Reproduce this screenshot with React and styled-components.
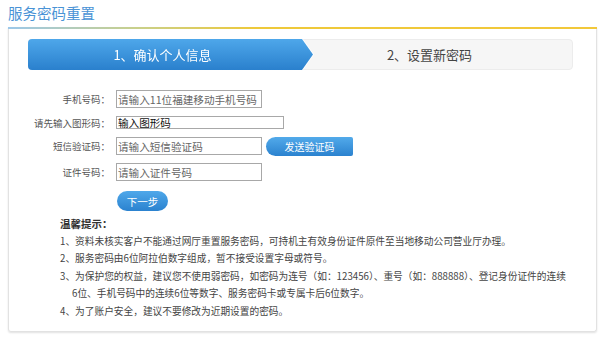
import React from 'react';
import styled, { createGlobalStyle } from 'styled-components';

const GlobalStyle = createGlobalStyle`
    html, body {
        margin: 0;
        padding: 0;
        background: #ffffff;
        font-family: "Noto Sans CJK SC", "Noto Sans", sans-serif;
    }
`;

const Page = styled.div`
    width: 600px;
    height: 339px;
    padding: 0 3px 0 8px;
    box-sizing: border-box;
    overflow: hidden;
`;

const PageTitle = styled.h1`
    margin: 0;
    height: 26px;
    line-height: 26px;
    font-size: 14.5px;
    font-weight: normal;
    color: #4a93d6;
`;

const Panel = styled.div`
    margin-top: 1px;
    height: 305px;
    box-sizing: border-box;
    border: 1px solid #e2e2e2;
    border-top: none;
    border-radius: 0 0 3px 3px;
    box-shadow: 0 1px 2px rgba(0, 0, 0, 0.12);
    padding: 12px 23px 12px 19px;
    position: relative;

    &::before {
        content: '';
        position: absolute;
        top: 0;
        left: -1px;
        right: -1px;
        height: 2px;
        background: linear-gradient(to right, #9cc8ea 0%, #c9d08a 22%, #eec93a 42%, #f2c83a 100%);
    }
`;

const StepBar = styled.div`
    display: flex;
    height: 31px;
    background: #f6f6f6;
    border: 1px solid #ececec;
    border-radius: 4px;
    box-sizing: border-box;
`;

const StepActiveWrap = styled.div`
    margin: -1px 0 -1px -1px;
    filter: drop-shadow(1.5px 0 0 #ffffff);
`;

const StepActive = styled.div`
    width: 285px;
    height: 31px;
    display: flex;
    align-items: center;
    justify-content: center;
    padding-right: 16px;
    box-sizing: border-box;
    color: #ffffff;
    font-size: 13px;
    background: linear-gradient(to bottom, #4ea7ea, #2a80cd);
    border-radius: 4px 0 0 4px;
    clip-path: polygon(0 0, calc(100% - 11px) 0, 100% 50%, calc(100% - 11px) 100%, 0 100%);
`;

const StepNext = styled.div`
    flex: 1;
    display: flex;
    align-items: center;
    justify-content: center;
    padding-right: 26px;
    font-size: 13px;
    color: #444;
`;

const Form = styled.div`
    margin-top: 20px;
    display: flex;
    flex-direction: column;
    gap: 8px;
`;

const Row = styled.div`
    display: flex;
    align-items: center;
    height: ${p => p.$h || 18}px;
`;

const Label = styled.label`
    width: 82px;
    text-align: right;
    font-size: 9.5px;
    color: #555;
    margin-right: 6px;
    white-space: nowrap;
`;

const Input = styled.input`
    width: ${p => p.$w || 146}px;
    height: ${p => p.$h || 18}px;
    box-sizing: border-box;
    border: 1px solid #a8a8a8;
    padding: 0 1px;
    font-family: inherit;
    font-size: 10.6px;
    outline: none;
    background: #fff;

    &::placeholder {
        color: ${p => (p.$dark ? '#111' : '#666')};
    }
`;

const SendButton = styled.button`
    margin-left: 4px;
    width: 87px;
    height: 19px;
    border: none;
    border-radius: 10px 2px 2px 10px;
    background: linear-gradient(to bottom, #52aaea, #2b82cf);
    color: #fff;
    font-family: inherit;
    font-size: 10px;
    padding: 0;
`;

const NextButton = styled.button`
    margin: 2px 0 0 89px;
    width: 51px;
    height: 20px;
    border: none;
    border-radius: 10px;
    background: linear-gradient(to bottom, #4fa8ea, #2b82cf);
    color: #fff;
    font-family: inherit;
    font-size: 10.5px;
    padding: 0;
    align-self: flex-start;
`;

const Tips = styled.div`
    margin: 4px 0 0 32px;
    font-size: 9.7px;
    color: #444;
    line-height: 17.5px;
`;

const TipsTitle = styled.div`
    font-weight: bold;
    font-size: 10.5px;
    color: #333;
`;

const Tip = styled.div`
    padding-left: 12px;
    text-indent: -12px;
    white-space: nowrap;
`;

export default function App() {
    return (
        <Page>
            <GlobalStyle />
            <PageTitle>服务密码重置</PageTitle>
            <Panel>
                <StepBar>
                    <StepActiveWrap>
                        <StepActive>1、确认个人信息</StepActive>
                    </StepActiveWrap>
                    <StepNext>2、设置新密码</StepNext>
                </StepBar>
                <Form>
                    <Row>
                        <Label>手机号码：</Label>
                        <Input placeholder="请输入11位福建移动手机号码" />
                    </Row>
                    <Row $h={13}>
                        <Label>请先输入图形码：</Label>
                        <Input $w={168} $h={13} $dark placeholder="输入图形码" />
                    </Row>
                    <Row>
                        <Label>短信验证码：</Label>
                        <Input placeholder="请输入短信验证码" />
                        <SendButton>发送验证码</SendButton>
                    </Row>
                    <Row>
                        <Label>证件号码：</Label>
                        <Input placeholder="请输入证件号码" />
                    </Row>
                    <NextButton>下一步</NextButton>
                </Form>
                <Tips>
                    <TipsTitle>温馨提示：</TipsTitle>
                    <Tip>1、资料未核实客户不能通过网厅重置服务密码，可持机主有效身份证件原件至当地移动公司营业厅办理。</Tip>
                    <Tip>2、服务密码由6位阿拉伯数字组成，暂不接受设置字母或符号。</Tip>
                    <Tip>
                        3、为保护您的权益，建议您不使用弱密码，如密码为连号（如：123456）、重号（如：888888）、登记身份证件的连续
                        <br />
                        6位、手机号码中的连续6位等数字、服务密码卡或专属卡后6位数字。
                    </Tip>
                    <Tip>4、为了账户安全，建议不要修改为近期设置的密码。</Tip>
                </Tips>
            </Panel>
        </Page>
    );
}
